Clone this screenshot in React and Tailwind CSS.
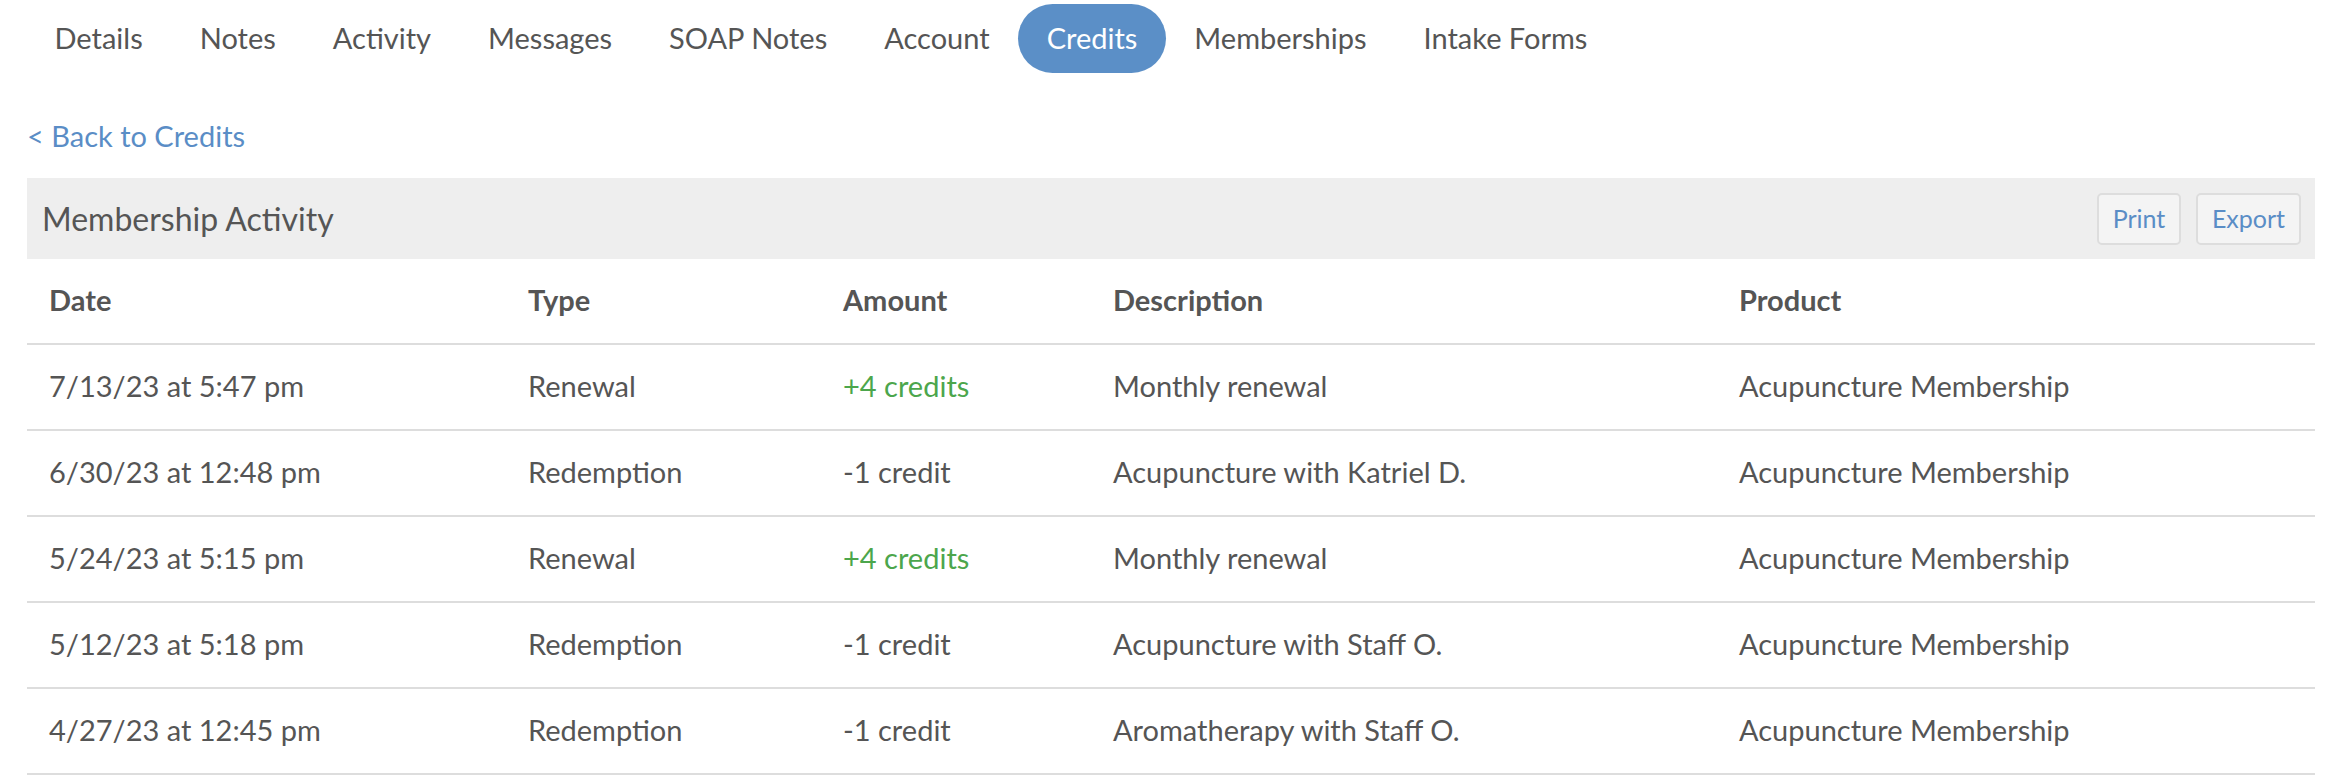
import React from "react";

const tabs = ["Details", "Notes", "Activity", "Messages", "SOAP Notes", "Account", "Credits", "Memberships", "Intake Forms"];

const rows = [
  { date: "7/13/23 at 5:47 pm", type: "Renewal", amount: "+4 credits", desc: "Monthly renewal", product: "Acupuncture Membership" },
  { date: "6/30/23 at 12:48 pm", type: "Redemption", amount: "-1 credit", desc: "Acupuncture with Katriel D.", product: "Acupuncture Membership" },
  { date: "5/24/23 at 5:15 pm", type: "Renewal", amount: "+4 credits", desc: "Monthly renewal", product: "Acupuncture Membership" },
  { date: "5/12/23 at 5:18 pm", type: "Redemption", amount: "-1 credit", desc: "Acupuncture with Staff O.", product: "Acupuncture Membership" },
  { date: "4/27/23 at 12:45 pm", type: "Redemption", amount: "-1 credit", desc: "Aromatherapy with Staff O.", product: "Acupuncture Membership" },
];

const cols = "grid grid-cols-[479px_315px_270px_626px_1fr]";

export default function App() {
  return (
    <div className="min-h-screen bg-white text-[#555] font-['Lato',sans-serif] text-[29px]">
      {/* tabs */}
      <nav className="flex pl-[26px] pt-[4px]">
        {tabs.map((t) => (
          <div
            key={t}
            className={
              t === "Credits"
                ? "h-[69px] px-[28.5px] pb-[2px] flex items-center rounded-full bg-[#5b8fc7] text-white"
                : "h-[69px] px-[28.5px] pb-[2px] flex items-center text-[#555]"
            }
          >
            {t}
          </div>
        ))}
      </nav>

      <div className="px-[27px] pr-[25px]">
        <a href="#" className="block mt-[43px] leading-[40px] text-[#5a8dc6]">
          &lt; Back to Credits
        </a>

        {/* panel header */}
        <div className="mt-[22px] h-[81px] bg-[#eeeeee] flex items-center justify-between pl-[15px] pr-[14px]">
          <h2 className="text-[32px] text-[#555]">Membership Activity</h2>
          <div className="flex gap-[15px]">
            <button className="h-[52px] w-[84px] rounded-[5px] border-2 border-[#dddddd] bg-[#f4f4f4] text-[25px] text-[#5a8dc6]">
              Print
            </button>
            <button className="h-[52px] w-[105px] rounded-[5px] border-2 border-[#dddddd] bg-[#f4f4f4] text-[25px] text-[#5a8dc6]">
              Export
            </button>
          </div>
        </div>

        {/* table */}
        <div className={`${cols} h-[86px] pb-[2px] items-center border-b-2 border-[#dddddd] font-bold`}>
          <div className="pl-[22px]">Date</div>
          <div className="pl-[22px]">Type</div>
          <div className="pl-[22px]">Amount</div>
          <div className="pl-[22px]">Description</div>
          <div className="pl-[22px]">Product</div>
        </div>
        {rows.map((r, i) => (
          <div key={i} className={`${cols} h-[86px] pb-[2px] items-center border-b-2 border-[#dddddd]`}>
            <div className="pl-[22px]">{r.date}</div>
            <div className="pl-[22px]">{r.type}</div>
            <div className={r.amount.startsWith("+") ? "pl-[22px] text-[#4ca64c]" : "pl-[22px]"}>{r.amount}</div>
            <div className="pl-[22px]">{r.desc}</div>
            <div className="pl-[22px]">{r.product}</div>
          </div>
        ))}
      </div>
    </div>
  );
}
